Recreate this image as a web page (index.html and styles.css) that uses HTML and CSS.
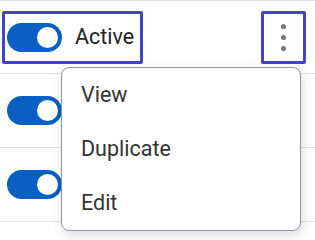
FILE: index.html
```html
<!DOCTYPE html>
<html lang="en">

<head>
    <meta charset="UTF-8">
    <meta name="viewport" content="width=device-width, initial-scale=1.0">
    <title>Status list</title>
    <link rel="stylesheet" href="styles.css">
</head>

<body>
    <div class="list">
        <div class="row">
            <label class="switch-label focused">
                <span class="switch"><span class="knob"></span></span>
                <span class="switch-text">Active</span>
            </label>
            <button class="kebab focused" aria-label="More">
                <span class="dot"></span>
                <span class="dot"></span>
                <span class="dot"></span>
            </button>
        </div>
        <div class="row">
            <label class="switch-label">
                <span class="switch"><span class="knob"></span></span>
                <span class="switch-text">Active</span>
            </label>
        </div>
        <div class="row">
            <label class="switch-label">
                <span class="switch"><span class="knob"></span></span>
                <span class="switch-text">Active</span>
            </label>
        </div>

        <ul class="menu">
            <li class="menu-item">View</li>
            <li class="menu-item">Duplicate</li>
            <li class="menu-item">Edit</li>
        </ul>
    </div>
</body>

</html>
```

FILE: styles.css
```css
body {
    margin: 0;
    padding: 0;
    min-height: 240px;
    background: #fff;
    font-family: Roboto, "Liberation Sans", Arial, sans-serif;
    color: #222;
}

.list {
    position: relative;
    border-top: 1px solid #e3e3e3;
}

.row {
    display: flex;
    align-items: center;
    justify-content: space-between;
    height: 72px;
    padding: 0 9px 0 2px;
    border-bottom: 1px solid #e3e3e3;
}

.row + .row {
    height: 73px;
}

.switch-label {
    display: flex;
    align-items: center;
    gap: 13px;
    padding: 9px 6px 9px 2px;
    border: 3px solid transparent;
    border-radius: 2px;
}

.focused {
    border-color: #4145c6 !important;
}

.switch {
    display: flex;
    justify-content: flex-end;
    align-items: center;
    width: 55px;
    height: 29px;
    padding: 0 2px;
    box-sizing: border-box;
    border-radius: 15px;
    background: #0a5fc2;
}

.knob {
    width: 21px;
    height: 21px;
    border-radius: 50%;
    background: #fff;
    border: 2px solid #0a5fc2;
}

.switch-text {
    font-size: 21.5px;
    line-height: 1.2;
    color: #222;
}

.kebab {
    display: flex;
    flex-direction: column;
    align-items: center;
    justify-content: center;
    gap: 6px;
    width: 45px;
    height: 53px;
    padding: 0;
    background: #fff;
    border: 3px solid transparent;
    border-radius: 2px;
    cursor: pointer;
}

.dot {
    width: 5px;
    height: 5px;
    border-radius: 50%;
    background: #777;
}

/* open dropdown of the first row */
.menu {
    position: absolute;
    top: 66px;
    left: 61px;
    width: 240px;
    height: 164px;
    box-sizing: border-box;
    margin: 0;
    padding: 0;
    list-style: none;
    background: #fff;
    border: 1px solid #8c95a6;
    border-radius: 8px;
    box-shadow: 2px 4px 12px rgba(0, 0, 0, 0.14);
    overflow: hidden;
    z-index: 10;
}

.menu-item {
    display: flex;
    align-items: center;
    height: 54px;
    padding-left: 19px;
    font-size: 21.5px;
    line-height: 1.2;
    color: #333;
    cursor: pointer;
}
```
